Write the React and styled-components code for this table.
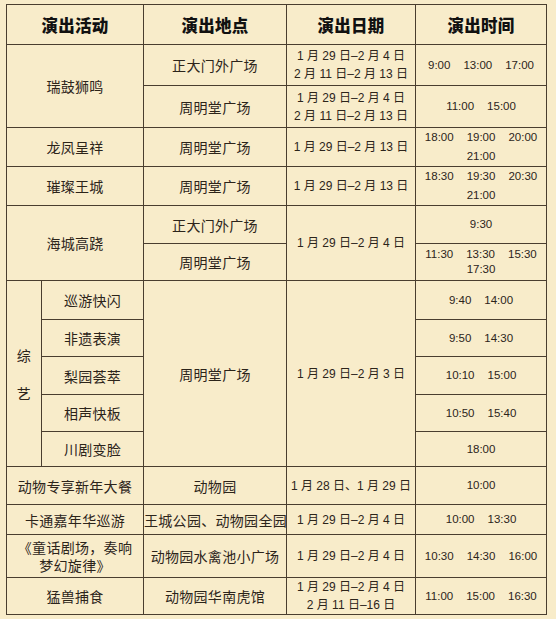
import React from "react";
import styled, { createGlobalStyle } from "styled-components";

const GlobalStyle = createGlobalStyle`
  body {
    margin: 0;
    background: #f8ecca;
  }
`;

const line = "#4a3e2f";

const Wrap = styled.div`
  padding: 4px 0 0 6px;
`;

const Table = styled.table`
  border-collapse: separate;
  border-spacing: 0;
  table-layout: fixed;
  width: 541px;
  border-top: 1px solid ${line};
  border-left: 1px solid ${line};
  color: #2c241a;
  font-family: "Noto Sans CJK SC", sans-serif;
`;

const Col = styled.col`
  width: ${(p) => p.$w}px;
`;

const Row = styled.tr`
  height: ${(p) => p.$h}px;
`;

const Cell = styled.td`
  box-sizing: border-box;
  border-right: 1px solid ${line};
  border-bottom: 1px solid ${line};
  padding: 0;
  text-align: center;
  vertical-align: middle;
  overflow: hidden;
  white-space: nowrap;
`;

const HeadCell = styled(Cell).attrs({ as: "th" })`
  font-size: 16.5px;
  font-weight: 900;
  color: #111;
  letter-spacing: 0.3px;
`;

const NameCell = styled(Cell)`
  font-size: 14px;
  letter-spacing: 0.3px;
  line-height: ${(p) => p.$lh || 18}px;
`;

const DateCell = styled(Cell)`
  font-family: "Liberation Sans", "Noto Sans CJK SC", sans-serif;
  font-size: 12px;
  line-height: 18px;
`;

const TimeCell = styled(Cell)`
  font-family: "Liberation Sans", Arial, sans-serif;
  font-size: 11.5px;
  line-height: ${(p) => p.$lh || 19}px;
`;

const TimeLine = styled.div`
  display: flex;
  justify-content: center;
  gap: 13px;
`;

const Vertical = styled.div`
  display: flex;
  flex-direction: column;
  align-items: center;
  gap: 20px;
  font-size: 14px;
`;

function Lines({ items }) {
  return items.map((t, i) => <div key={i}>{t}</div>);
}

function Times({ lines }) {
  return lines.map((l, i) => (
    <TimeLine key={i}>
      {l.map((t) => (
        <span key={t}>{t}</span>
      ))}
    </TimeLine>
  ));
}

const twoSpans = ["1 月 29 日–2 月 4 日", "2 月 11 日–2 月 13 日"];

function App() {
  return (
    <>
      <GlobalStyle />
      <Wrap>
        <Table>
          <colgroup>
            <Col $w={35} />
            <Col $w={102} />
            <Col $w={143} />
            <Col $w={129} />
            <Col $w={131} />
          </colgroup>
          <thead>
            <Row $h={40}>
              <HeadCell colSpan={2}>演出活动</HeadCell>
              <HeadCell>演出地点</HeadCell>
              <HeadCell>演出日期</HeadCell>
              <HeadCell>演出时间</HeadCell>
            </Row>
          </thead>
          <tbody>
            <Row $h={41}>
              <NameCell colSpan={2} rowSpan={2}>瑞鼓狮鸣</NameCell>
              <NameCell>正大门外广场</NameCell>
              <DateCell><Lines items={twoSpans} /></DateCell>
              <TimeCell><Times lines={[["9:00", "13:00", "17:00"]]} /></TimeCell>
            </Row>
            <Row $h={42}>
              <NameCell>周明堂广场</NameCell>
              <DateCell><Lines items={twoSpans} /></DateCell>
              <TimeCell><Times lines={[["11:00", "15:00"]]} /></TimeCell>
            </Row>
            <Row $h={38}>
              <NameCell colSpan={2}>龙凤呈祥</NameCell>
              <NameCell>周明堂广场</NameCell>
              <DateCell>1 月 29 日–2 月 13 日</DateCell>
              <TimeCell><Times lines={[["18:00", "19:00", "20:00"], ["21:00"]]} /></TimeCell>
            </Row>
            <Row $h={38}>
              <NameCell colSpan={2}>璀璨王城</NameCell>
              <NameCell>周明堂广场</NameCell>
              <DateCell>1 月 29 日–2 月 13 日</DateCell>
              <TimeCell><Times lines={[["18:30", "19:30", "20:30"], ["21:00"]]} /></TimeCell>
            </Row>
            <Row $h={38}>
              <NameCell colSpan={2} rowSpan={2}>海城高跷</NameCell>
              <NameCell>正大门外广场</NameCell>
              <DateCell rowSpan={2}>1 月 29 日–2 月 4 日</DateCell>
              <TimeCell><Times lines={[["9:30"]]} /></TimeCell>
            </Row>
            <Row $h={37}>
              <NameCell>周明堂广场</NameCell>
              <TimeCell $lh={15}><Times lines={[["11:30", "13:30", "15:30"], ["17:30"]]} /></TimeCell>
            </Row>
            <Row $h={39}>
              <NameCell rowSpan={5}>
                <Vertical>
                  <span>综</span>
                  <span>艺</span>
                </Vertical>
              </NameCell>
              <NameCell>巡游快闪</NameCell>
              <NameCell rowSpan={5}>周明堂广场</NameCell>
              <DateCell rowSpan={5}>1 月 29 日–2 月 3 日</DateCell>
              <TimeCell><Times lines={[["9:40", "14:00"]]} /></TimeCell>
            </Row>
            <Row $h={37}>
              <NameCell>非遗表演</NameCell>
              <TimeCell><Times lines={[["9:50", "14:30"]]} /></TimeCell>
            </Row>
            <Row $h={38}>
              <NameCell>梨园荟萃</NameCell>
              <TimeCell><Times lines={[["10:10", "15:00"]]} /></TimeCell>
            </Row>
            <Row $h={37}>
              <NameCell>相声快板</NameCell>
              <TimeCell><Times lines={[["10:50", "15:40"]]} /></TimeCell>
            </Row>
            <Row $h={35}>
              <NameCell>川剧变脸</NameCell>
              <TimeCell><Times lines={[["18:00"]]} /></TimeCell>
            </Row>
            <Row $h={38}>
              <NameCell colSpan={2}>动物专享新年大餐</NameCell>
              <NameCell>动物园</NameCell>
              <DateCell>1 月 28 日、1 月 29 日</DateCell>
              <TimeCell><Times lines={[["10:00"]]} /></TimeCell>
            </Row>
            <Row $h={30}>
              <NameCell colSpan={2}>卡通嘉年华巡游</NameCell>
              <NameCell>王城公园、动物园全园</NameCell>
              <DateCell>1 月 29 日–2 月 4 日</DateCell>
              <TimeCell><Times lines={[["10:00", "13:30"]]} /></TimeCell>
            </Row>
            <Row $h={43}>
              <NameCell colSpan={2}>
                <Lines items={["《童话剧场，奏响", "梦幻旋律》"]} />
              </NameCell>
              <NameCell>动物园水禽池小广场</NameCell>
              <DateCell>1 月 29 日–2 月 4 日</DateCell>
              <TimeCell><Times lines={[["10:30", "14:30", "16:00"]]} /></TimeCell>
            </Row>
            <Row $h={36}>
              <NameCell colSpan={2}>猛兽捕食</NameCell>
              <NameCell>动物园华南虎馆</NameCell>
              <DateCell><Lines items={["1 月 29 日–2 月 4 日", "2 月 11 日–16 日"]} /></DateCell>
              <TimeCell><Times lines={[["11:00", "15:00", "16:30"]]} /></TimeCell>
            </Row>
          </tbody>
        </Table>
      </Wrap>
    </>
  );
}

export default App;
